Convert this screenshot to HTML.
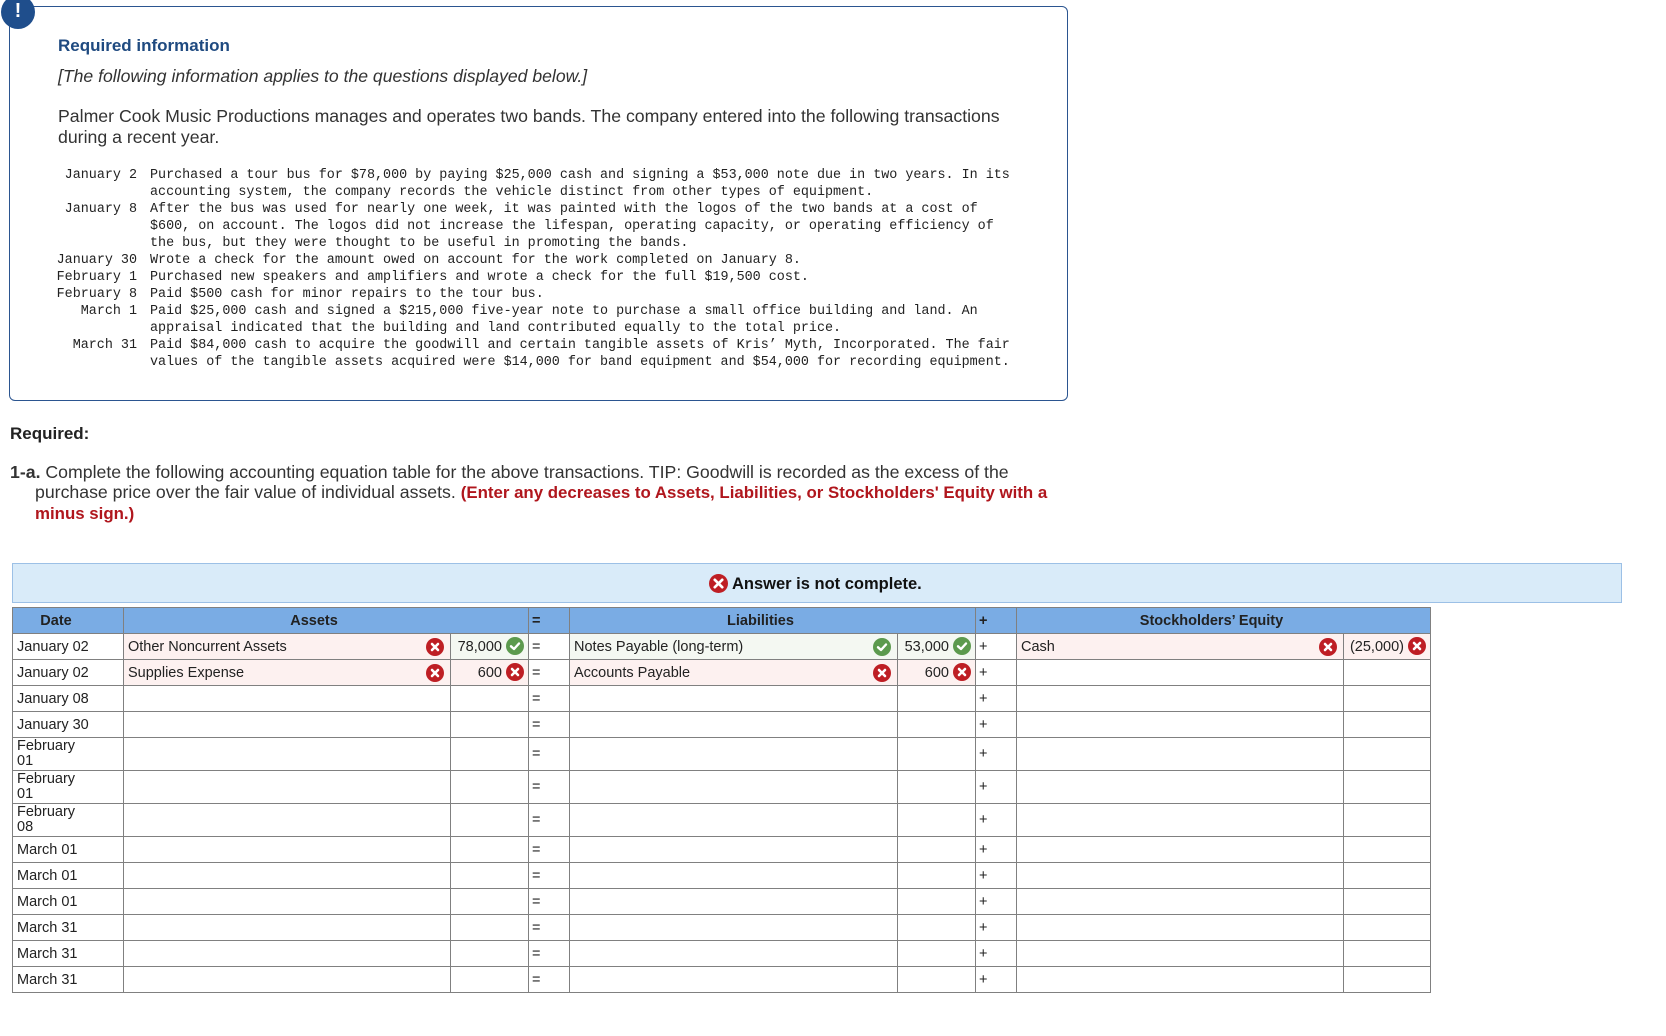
<!DOCTYPE html>
<html><head><meta charset="utf-8"><style>
*{box-sizing:border-box;margin:0;padding:0}
body{width:1666px;height:1036px;background:#fff;font-family:"Liberation Sans",Arial,sans-serif;color:#222;position:relative;overflow:hidden}
.abs{position:absolute;white-space:nowrap}
#box{position:absolute;left:9px;top:6px;width:1059px;height:395px;border:1.5px solid #2b5590;border-radius:6px}
#bang{position:absolute;left:1px;top:-5px;width:34px;height:34px;border-radius:50%;background:#1f4e8c;color:#fff;font-weight:bold;font-size:20px;text-align:center;line-height:32px}
.mono{font-family:"Liberation Mono",monospace;font-size:13.4px;color:#222}
.lab{position:absolute;width:137px;text-align:right;white-space:pre}
.txt{position:absolute;left:150px;white-space:pre}
#ans{position:absolute;left:12px;top:563px;width:1610px;height:40px;background:#d9ebf9;border:1.5px solid #9cc0e6}
table{position:absolute;left:12px;top:607px;border-collapse:collapse;table-layout:fixed;font-size:14.5px}
td,th{border:1.5px solid #808080;padding:0 4px;overflow:hidden;white-space:nowrap;height:26px}
th{background:#7aace4;font-weight:bold;color:#222;height:26px;padding-right:28px}
th.sym{padding-right:3px}
tr.d td{height:33px}
td.dt{line-height:15px;white-space:normal}
.pk{background:#fdf1f0}
.gr{background:#f4f8f2}
.ic{display:inline-block;width:18px;height:18px;border-radius:50%;vertical-align:middle;position:relative;top:-1px}
.x{background:#be1e24}.c{background:#5c9a4e}
.ic svg{display:block}
.r{text-align:right}
.sym{padding:0 3px}
td.acc{position:relative}
td.acc .ic{position:absolute;right:6px;top:4px}
.red{color:#b0161d;font-size:16.85px}
</style></head><body>
<div id="box"></div>
<div id="bang">!</div>
<div class="abs" style="left:58px;top:36px;font-size:17px;font-weight:bold;color:#1f4a80">Required information</div>
<div class="abs" style="left:58px;top:66px;font-size:17.6px;font-style:italic;color:#333">[The following information applies to the questions displayed below.]</div>
<div class="abs" style="left:58px;top:106px;font-size:17.7px;line-height:21px;color:#333">Palmer Cook Music Productions manages and operates two bands. The company entered into the following transactions<br>during a recent year.</div>
<div class="mono abs" style="left:0;top:167px;line-height:17px;width:1060px;height:240px">
<div class="lab" style="top:0">January 2</div><div class="txt" style="top:0">Purchased a tour bus for $78,000 by paying $25,000 cash and signing a $53,000 note due in two years. In its</div>
<div class="txt" style="top:17px">accounting system, the company records the vehicle distinct from other types of equipment.</div>
<div class="lab" style="top:34px">January 8</div><div class="txt" style="top:34px">After the bus was used for nearly one week, it was painted with the logos of the two bands at a cost of</div>
<div class="txt" style="top:51px">$600, on account. The logos did not increase the lifespan, operating capacity, or operating efficiency of</div>
<div class="txt" style="top:68px">the bus, but they were thought to be useful in promoting the bands.</div>
<div class="lab" style="top:85px">January 30</div><div class="txt" style="top:85px">Wrote a check for the amount owed on account for the work completed on January 8.</div>
<div class="lab" style="top:102px">February 1</div><div class="txt" style="top:102px">Purchased new speakers and amplifiers and wrote a check for the full $19,500 cost.</div>
<div class="lab" style="top:119px">February 8</div><div class="txt" style="top:119px">Paid $500 cash for minor repairs to the tour bus.</div>
<div class="lab" style="top:136px">March 1</div><div class="txt" style="top:136px">Paid $25,000 cash and signed a $215,000 five-year note to purchase a small office building and land. An</div>
<div class="txt" style="top:153px">appraisal indicated that the building and land contributed equally to the total price.</div>
<div class="lab" style="top:170px">March 31</div><div class="txt" style="top:170px">Paid $84,000 cash to acquire the goodwill and certain tangible assets of Kris’ Myth, Incorporated. The fair</div>
<div class="txt" style="top:187px">values of the tangible assets acquired were $14,000 for band equipment and $54,000 for recording equipment.</div>
</div>
<div class="abs" style="left:10px;top:424px;font-size:17px;font-weight:bold;color:#222">Required:</div>
<div class="abs" style="left:10px;top:462px;font-size:17.7px;line-height:20px;color:#333"><b>1-a.</b> Complete the following accounting equation table for the above transactions. TIP: Goodwill is recorded as the excess of the<br><span style="padding-left:25px">purchase price over the fair value of individual assets. <b class="red">(Enter any decreases to Assets, Liabilities, or Stockholders' Equity with a</b></span><br><b class="red" style="padding-left:25px">minus sign.)</b></div>
<div id="ans"></div>
<div class="abs" style="left:709px;top:575px;font-size:16.5px;font-weight:bold;color:#111"><span class="ic x" style="width:19px;height:19px"><svg width="19" height="19" viewBox="0 0 18 18"><path d="M5.5 5.5L12.5 12.5M12.5 5.5L5.5 12.5" stroke="#fff" stroke-width="2.6" stroke-linecap="round"/></svg></span> Answer is not complete.</div>
<table>
<colgroup><col style="width:111px"><col style="width:327px"><col style="width:78px"><col style="width:41px"><col style="width:328px"><col style="width:78px"><col style="width:41px"><col style="width:327px"><col style="width:87px"></colgroup>
<tr><th>Date</th><th colspan="2">Assets</th><th style="text-align:left" class="sym">=</th><th colspan="2">Liabilities</th><th style="text-align:left" class="sym">+</th><th colspan="2">Stockholders’ Equity</th></tr>
<tr><td>January 02</td><td class="pk acc">Other Noncurrent Assets<span class="ic x"><svg width="18" height="18"><path d="M6 6L12 12M12 6L6 12" stroke="#fff" stroke-width="2.6" stroke-linecap="round"/></svg></span></td><td class="gr r">78,000 <span class="ic c"><svg width="18" height="18"><path d="M5 9.3L8 12L13 6.5" stroke="#fff" stroke-width="2.4" fill="none" stroke-linecap="round" stroke-linejoin="round"/></svg></span></td><td class="sym">=</td><td class="gr acc">Notes Payable (long-term)<span class="ic c"><svg width="18" height="18"><path d="M5 9.3L8 12L13 6.5" stroke="#fff" stroke-width="2.4" fill="none" stroke-linecap="round" stroke-linejoin="round"/></svg></span></td><td class="gr r">53,000 <span class="ic c"><svg width="18" height="18"><path d="M5 9.3L8 12L13 6.5" stroke="#fff" stroke-width="2.4" fill="none" stroke-linecap="round" stroke-linejoin="round"/></svg></span></td><td class="sym">+</td><td class="pk acc">Cash<span class="ic x"><svg width="18" height="18"><path d="M6 6L12 12M12 6L6 12" stroke="#fff" stroke-width="2.6" stroke-linecap="round"/></svg></span></td><td class="pk r">(25,000) <span class="ic x"><svg width="18" height="18"><path d="M6 6L12 12M12 6L6 12" stroke="#fff" stroke-width="2.6" stroke-linecap="round"/></svg></span></td></tr>
<tr><td>January 02</td><td class="pk acc">Supplies Expense<span class="ic x"><svg width="18" height="18"><path d="M6 6L12 12M12 6L6 12" stroke="#fff" stroke-width="2.6" stroke-linecap="round"/></svg></span></td><td class="pk r">600 <span class="ic x"><svg width="18" height="18"><path d="M6 6L12 12M12 6L6 12" stroke="#fff" stroke-width="2.6" stroke-linecap="round"/></svg></span></td><td class="sym">=</td><td class="pk acc">Accounts Payable<span class="ic x"><svg width="18" height="18"><path d="M6 6L12 12M12 6L6 12" stroke="#fff" stroke-width="2.6" stroke-linecap="round"/></svg></span></td><td class="pk r">600 <span class="ic x"><svg width="18" height="18"><path d="M6 6L12 12M12 6L6 12" stroke="#fff" stroke-width="2.6" stroke-linecap="round"/></svg></span></td><td class="sym">+</td><td></td><td></td></tr>
<tr><td>January 08</td><td></td><td></td><td class="sym">=</td><td></td><td></td><td class="sym">+</td><td></td><td></td></tr>
<tr><td>January 30</td><td></td><td></td><td class="sym">=</td><td></td><td></td><td class="sym">+</td><td></td><td></td></tr>
<tr class="d"><td class="dt">February<br>01</td><td></td><td></td><td class="sym">=</td><td></td><td></td><td class="sym">+</td><td></td><td></td></tr>
<tr class="d"><td class="dt">February<br>01</td><td></td><td></td><td class="sym">=</td><td></td><td></td><td class="sym">+</td><td></td><td></td></tr>
<tr class="d"><td class="dt">February<br>08</td><td></td><td></td><td class="sym">=</td><td></td><td></td><td class="sym">+</td><td></td><td></td></tr>
<tr><td>March 01</td><td></td><td></td><td class="sym">=</td><td></td><td></td><td class="sym">+</td><td></td><td></td></tr>
<tr><td>March 01</td><td></td><td></td><td class="sym">=</td><td></td><td></td><td class="sym">+</td><td></td><td></td></tr>
<tr><td>March 01</td><td></td><td></td><td class="sym">=</td><td></td><td></td><td class="sym">+</td><td></td><td></td></tr>
<tr><td>March 31</td><td></td><td></td><td class="sym">=</td><td></td><td></td><td class="sym">+</td><td></td><td></td></tr>
<tr><td>March 31</td><td></td><td></td><td class="sym">=</td><td></td><td></td><td class="sym">+</td><td></td><td></td></tr>
<tr><td>March 31</td><td></td><td></td><td class="sym">=</td><td></td><td></td><td class="sym">+</td><td></td><td></td></tr>
</table>
</body></html>
